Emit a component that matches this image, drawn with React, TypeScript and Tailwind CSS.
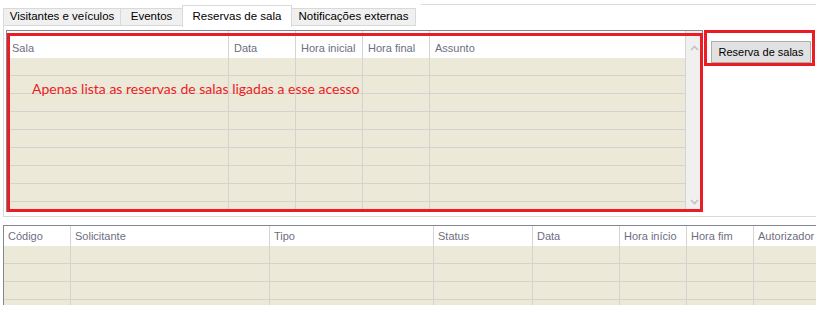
import React from "react";

const TOP_COLS = [
  { label: "Sala", w: 222 },
  { label: "Data", w: 67 },
  { label: "Hora inicial", w: 67 },
  { label: "Hora final", w: 67 },
  { label: "Assunto", w: 256 },
];

const BOTTOM_COLS = [
  { label: "Código", w: 67 },
  { label: "Solicitante", w: 199 },
  { label: "Tipo", w: 164 },
  { label: "Status", w: 99 },
  { label: "Data", w: 87 },
  { label: "Hora início", w: 67 },
  { label: "Hora fim", w: 67 },
  { label: "Autorizador", w: 62 },
];

const TABS = [
  { label: "Visitantes e veículos", w: "w-[118px]" },
  { label: "Eventos", w: "w-[63px]" },
  { label: "Reservas de sala", w: "w-[110px]", active: true },
  { label: "Notificações externas", w: "w-[125px]" },
];

const gridFont = { fontFamily: '"Liberation Sans", Arial, sans-serif' };

function Chevron({ up }: { up?: boolean }) {
  return (
    <svg width="9" height="6" viewBox="0 0 9 6" className="block">
      <path
        d={up ? "M1 5 L4.5 1.5 L8 5" : "M1 1 L4.5 4.5 L8 1"}
        fill="none"
        stroke="#c2c2c2"
        strokeWidth="1.6"
      />
    </svg>
  );
}

function TopGrid() {
  return (
    <div className="w-[697px] h-[182px] border border-[#828790] flex overflow-hidden bg-white" style={gridFont}>
      <div className="flex flex-col w-[679px]">
        <div className="flex h-[27px] shrink-0 bg-white">
          {TOP_COLS.map((c) => (
            <div
              key={c.label}
              className="h-full border-r border-[#d5d5d5] pl-[5px] pt-[10px] text-[11px] leading-[14px] text-[#6e6e82] whitespace-nowrap"
              style={{ width: c.w }}
            >
              {c.label}
            </div>
          ))}
        </div>
        {Array.from({ length: 9 }).map((_, i) => (
          <div key={i} className="flex h-[18px] shrink-0 bg-[#ece9d8]">
            {TOP_COLS.map((c) => (
              <div key={c.label} className="h-full border-r border-b border-[#d5d3d0]" style={{ width: c.w }} />
            ))}
          </div>
        ))}
      </div>
      <div className="flex-1 bg-[#f0f0f0] flex flex-col items-center justify-between pt-[14px] pb-[6px]">
        <Chevron up />
        <Chevron />
      </div>
    </div>
  );
}

function BottomGrid() {
  return (
    <div className="mt-[8px] ml-[3px] w-[813px] h-[80px] border-t border-l border-[#828790] flex flex-col overflow-hidden bg-white" style={gridFont}>
      <div className="flex h-[20px] shrink-0 bg-white">
        {BOTTOM_COLS.map((c, i) => (
          <div
            key={c.label}
            className={
              "h-full flex items-center pl-[4px] text-[11px] text-[#6e6e82] whitespace-nowrap border-[#d5d5d5] " +
              (i < BOTTOM_COLS.length - 1 ? "border-r" : "")
            }
            style={{ width: c.w }}
          >
            {c.label}
          </div>
        ))}
      </div>
      {Array.from({ length: 4 }).map((_, i) => (
        <div key={i} className="flex h-[18px] shrink-0 bg-[#ece9d8]">
          {BOTTOM_COLS.map((c, j) => (
            <div
              key={c.label}
              className={
                "h-full border-b border-[#d5d3d0] " + (j < BOTTOM_COLS.length - 1 ? "border-r" : "")
              }
              style={{ width: c.w }}
            />
          ))}
        </div>
      ))}
    </div>
  );
}

export default function App() {
  return (
    <div
      className="relative w-[825px] h-[314px] bg-white overflow-hidden text-black"
      style={{ fontFamily: '"Liberation Sans", Arial, sans-serif' }}
    >
      {/* Tab strip */}
      <div className="flex items-end h-[26px] pl-[3px]">
        {TABS.map((t, i) =>
          t.active ? (
            <div
              key={t.label}
              className={`${t.w} -ml-px h-[22px] -mb-px relative z-10 bg-white border border-b-0 border-[#d9d9d9] flex items-center justify-center text-[11.5px] whitespace-nowrap`}
            >
              {t.label}
            </div>
          ) : (
            <div
              key={t.label}
              className={`${t.w} ${i > 0 ? "-ml-px" : ""} h-[18px] bg-[#f0f0f0] border border-[#d9d9d9] flex items-center justify-center text-[11.5px] whitespace-nowrap`}
            >
              {t.label}
            </div>
          )
        )}
        <div className="self-start mt-[4px] ml-[5px] w-[395px] border-t border-[#dcdcdc]" />
      </div>

      {/* Tab panel */}
      <div className="ml-[3px] w-[813px] h-[191px] border-l border-b border-[#d9d9d9] flex pt-[4px] pl-[2px]">
        <TopGrid />
        <div className="pl-[8px] pt-[9px]">
          <button className="w-[100px] h-[22px] bg-[#e1e1e1] border border-[#adadad] text-[11px] text-black">
            Reserva de salas
          </button>
        </div>
      </div>

      <BottomGrid />

      {/* Annotations */}
      <div className="absolute left-[7px] top-[33px] w-[696px] h-[179px] border-[3px] border-[#ed1c24] pointer-events-none" />
      <div className="absolute left-[704px] top-[30px] w-[111px] h-[36px] border-[3px] border-[#ed1c24] pointer-events-none" />
      <div
        className="absolute left-[32px] top-[80px] text-[14px] leading-[18px] text-[#ed1c24] whitespace-nowrap"
        style={{ fontFamily: 'Lato, "Open Sans", sans-serif' }}
      >
        Apenas lista as reservas de salas ligadas a esse acesso
      </div>
    </div>
  );
}
